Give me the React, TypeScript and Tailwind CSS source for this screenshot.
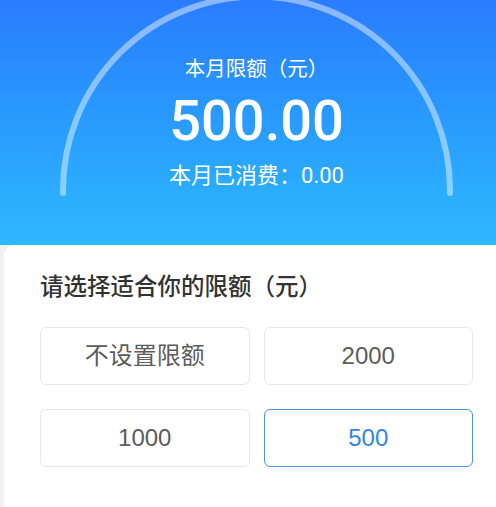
import { useState } from 'react';

const options = ['不设置限额', '2000', '1000', '500'];

export default function App() {
  const [selected, setSelected] = useState('500');

  return (
    <div
      className="relative w-full h-[507px] overflow-hidden bg-[#eff1f4]"
      style={{ fontFamily: '"Liberation Sans", "Noto Sans CJK SC", sans-serif' }}
    >
      {/* header */}
      <div className="relative h-[245px] bg-gradient-to-b from-[#2a7cfd] to-[#2eb9fe]">
        <svg className="absolute left-0 top-0" width="496" height="245" viewBox="0 0 496 245">
          <path
            d="M 63 193 L 63 190 A 193.5 193.5 0 0 1 450 190 L 450 193"
            fill="none"
            stroke="rgba(255,255,255,0.45)"
            strokeWidth="6"
            strokeLinecap="round"
          />
        </svg>
        <div className="relative flex flex-col items-center pl-[17px] pt-[59px] text-white">
          <div className="text-[20.5px] leading-none">本月限额（元）</div>
          <div
            className="mt-[13px] text-[56px] leading-none font-medium"
            style={{ fontFamily: 'Roboto, "Liberation Sans", sans-serif' }}
          >
            500.00
          </div>
          <div className="mt-[16px] text-[22px] leading-none">
            本月已消费：<span style={{ fontFamily: 'Roboto, "Liberation Sans", sans-serif' }}>0.00</span>
          </div>
        </div>
      </div>

      {/* card */}
      <div className="ml-[4px] h-[262px] bg-white rounded-tl-[10px] pl-[36px] pt-[31px]">
        <div className="text-[23.5px] leading-none font-medium text-[#333333]">请选择适合你的限额（元）</div>
        <div className="mt-[27px] w-[433px] grid grid-cols-2 gap-x-[14px] gap-y-[24px]">
          {options.map((opt) => {
            const active = opt === selected;
            return (
              <button
                key={opt}
                onClick={() => setSelected(opt)}
                className={
                  active
                    ? 'h-[58px] rounded-[6px] border-[1.5px] border-[#4a94ea] text-[#2f86ea] text-[24px] bg-white'
                    : 'h-[58px] rounded-[6px] border border-[#e6e8eb] text-[#5c5c5c] text-[24px] bg-white'
                }
              >
                {opt}
              </button>
            );
          })}
        </div>
      </div>
    </div>
  );
}
